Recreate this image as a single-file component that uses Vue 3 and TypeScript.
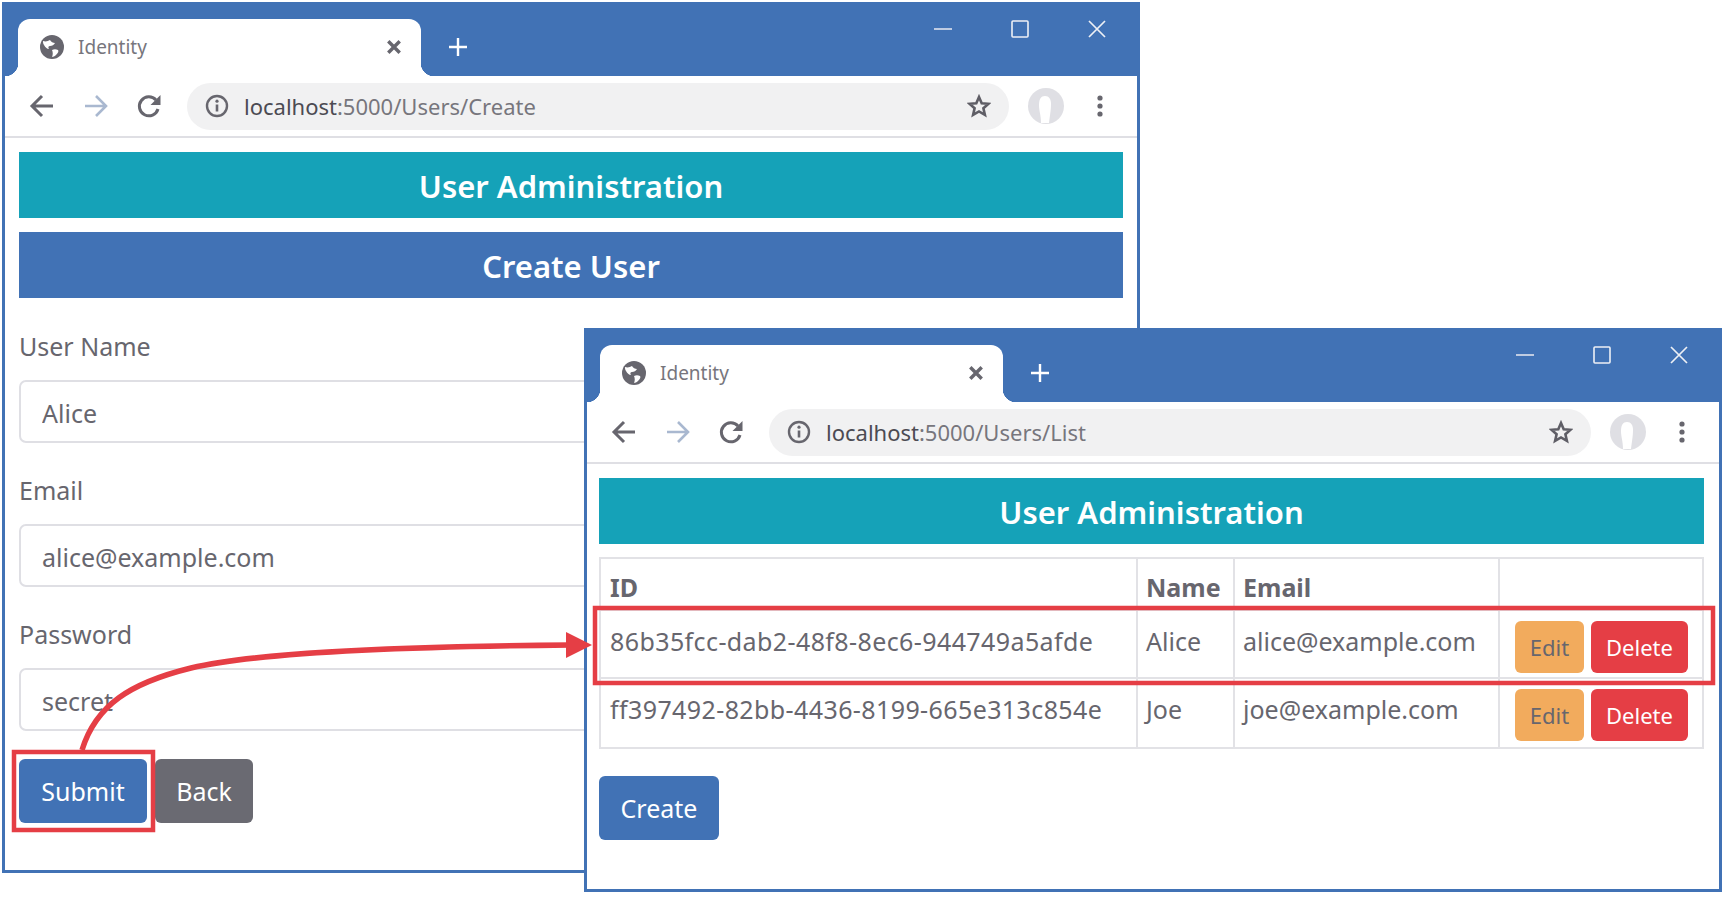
<script setup lang="ts">
interface BrowserWindow {
  id: string;
  host: string;
  path: string;
}

interface UserRow {
  id: string;
  name: string;
  email: string;
}

const windows: BrowserWindow[] = [
  { id: 'create', host: 'localhost', path: ':5000/Users/Create' },
  { id: 'list', host: 'localhost', path: ':5000/Users/List' },
];

const fields = [
  { label: 'User Name', value: 'Alice' },
  { label: 'Email', value: 'alice@example.com' },
  { label: 'Password', value: 'secret' },
];

const users: UserRow[] = [
  { id: '86b35fcc-dab2-48f8-8ec6-944749a5afde', name: 'Alice', email: 'alice@example.com' },
  { id: 'ff397492-82bb-4436-8199-665e313c854e', name: 'Joe', email: 'joe@example.com' },
];
</script>

<template>
  <div class="page">
    <section v-for="win in windows" :key="win.id" class="window" :class="`window--${win.id}`">
      <header class="titlebar">
        <div class="tab">
          <svg class="globe" viewBox="0 0 24 24">
            <circle cx="12" cy="12" r="12" fill="#67666e" />
            <path d="M3 6c3 1 5 0 7-1 1 2 3 3 5 3-1 2-3 3-5 3-2 0-2 2-1 3-2 0-4-2-5-4-1-1-1-3-1-4zM12 15c2-1 4-1 6 0 1 1 0 3-2 5-1 1-3 2-4 2 1-2 1-5 0-7z" fill="#fff" />
          </svg>
          <span class="tab__title">Identity</span>
          <svg class="tab__close" viewBox="0 0 14 14">
            <path d="M2 2l10 10M12 2L2 12" stroke="#67666e" stroke-width="3" fill="none" />
          </svg>
        </div>
        <svg class="newtab" viewBox="0 0 20 20">
          <path d="M10 1v18M1 10h18" stroke="#fff" stroke-width="2.4" fill="none" />
        </svg>
        <div class="controls">
          <svg viewBox="0 0 18 18"><path d="M0 9h18" stroke="#dfe3ee" stroke-width="1.6" /></svg>
          <svg viewBox="0 0 18 18"><rect x="1" y="1" width="16" height="16" rx="1" stroke="#eef0f5" stroke-width="1.6" fill="none" /></svg>
          <svg viewBox="0 0 18 18"><path d="M1 1l16 16M17 1L1 17" stroke="#eef0f5" stroke-width="1.7" fill="none" /></svg>
        </div>
      </header>

      <div class="toolbar">
        <svg class="navicon" viewBox="0 0 28 28">
          <path d="M25 14H5M14 4L4 14l10 10" stroke="#67666e" stroke-width="3" fill="none" />
        </svg>
        <svg class="navicon" viewBox="0 0 28 28">
          <path d="M3 14h20M14 4l10 10-10 10" stroke="#a9b8d0" stroke-width="2.6" fill="none" />
        </svg>
        <svg class="navicon" viewBox="0 0 28 28">
          <path d="M22 17a9.5 9.5 0 1 1-2-9" stroke="#67666e" stroke-width="3" fill="none" />
          <path d="M24.5 3v10h-10z" fill="#67666e" />
        </svg>
        <div class="omnibox">
          <svg class="info" viewBox="0 0 24 24">
            <circle cx="12" cy="12" r="10" stroke="#67666e" stroke-width="2.4" fill="none" />
            <path d="M12 10.5v7" stroke="#67666e" stroke-width="2.6" />
            <circle cx="12" cy="7.2" r="1.6" fill="#67666e" />
          </svg>
          <span class="url"><span class="url__host">{{ win.host }}</span>{{ win.path }}</span>
          <svg class="star" viewBox="0 0 24 24">
            <path d="M12 3l2.7 6.2 6.8.6-5.1 4.5 1.5 6.6L12 17.4l-5.9 3.5 1.5-6.6-5.1-4.5 6.8-.6z" stroke="#5f5e66" stroke-width="2.6" fill="none" />
          </svg>
        </div>
        <svg class="avatar" viewBox="0 0 36 36">
          <circle cx="18" cy="18" r="18" fill="#dfdfe4" />
          <path d="M13 35c0-8-2-12-2-18 0-6 2-9 6-9s6 3 6 8c0 6-1 11-2 19z" fill="#fff" />
        </svg>
        <svg class="kebab" viewBox="0 0 6 24">
          <circle cx="3" cy="4" r="2.6" fill="#67666e" />
          <circle cx="3" cy="12" r="2.6" fill="#67666e" />
          <circle cx="3" cy="20" r="2.6" fill="#67666e" />
        </svg>
      </div>

      <main class="content">
        <div class="banner banner--teal">User Administration</div>

        <template v-if="win.id === 'create'">
          <div class="banner banner--blue banner--second">Create User</div>
          <form class="form">
            <div v-for="field in fields" :key="field.label" class="field">
              <label class="field__label">{{ field.label }}</label>
              <input class="field__input" type="text" :value="field.value" readonly />
            </div>
            <div class="actions">
              <button type="button" class="btn btn--blue btn--submit">Submit</button>
              <button type="button" class="btn btn--grey btn--back">Back</button>
            </div>
          </form>
        </template>

        <template v-else>
          <table class="users">
            <colgroup>
              <col class="users__id" />
              <col class="users__name" />
              <col class="users__email" />
              <col />
            </colgroup>
            <thead>
              <tr>
                <th>ID</th>
                <th>Name</th>
                <th>Email</th>
                <th></th>
              </tr>
            </thead>
            <tbody>
              <tr v-for="user in users" :key="user.id">
                <td class="users__guid">{{ user.id }}</td>
                <td>{{ user.name }}</td>
                <td>{{ user.email }}</td>
                <td class="users__actions">
                  <button type="button" class="btn btn--small btn--orange">Edit</button>
                  <button type="button" class="btn btn--small btn--red">Delete</button>
                </td>
              </tr>
            </tbody>
          </table>
          <button type="button" class="btn btn--blue btn--create">Create</button>
        </template>
      </main>
    </section>

    <svg class="callouts" viewBox="0 0 1725 897">
      <rect x="14" y="752" width="139" height="78" fill="none" stroke="#e53e45" stroke-width="4.5" />
      <rect x="595" y="608" width="1118" height="75" fill="none" stroke="#e53e45" stroke-width="4.5" />
      <path d="M82 750C96 705 130 683 191 668C250 654 370 647 570 645" fill="none" stroke="#e53e45" stroke-width="5.5" />
      <path d="M566 632L592 645L566 658z" fill="#e53e45" />
    </svg>
  </div>
</template>

<style>
html,
body {
  margin: 0;
  background: #fff;
}
</style>

<style scoped>
.page {
  position: relative;
  width: 1725px;
  height: 897px;
  overflow: hidden;
  background: #fff;
  font-family: "Noto Sans", "Open Sans", sans-serif;
  color: #67666e;
}

.window {
  position: absolute;
  box-sizing: border-box;
  display: flex;
  flex-direction: column;
  border: 3px solid #4172b5;
  background: #fff;
}

.window--create {
  left: 2px;
  top: 2px;
  width: 1138px;
  height: 871px;
}

.window--list {
  left: 584px;
  top: 328px;
  width: 1138px;
  height: 564px;
}

.titlebar {
  display: flex;
  align-items: flex-start;
  height: 71px;
  flex: none;
  padding-left: 13px;
  background: #4172b5;
}

.tab {
  position: relative;
  display: flex;
  align-items: center;
  box-sizing: border-box;
  width: 403px;
  height: 57px;
  margin-top: 14px;
  padding: 0 19px 2px 22px;
  background: #fff;
  border-radius: 12px 12px 0 0;
}

.tab::before,
.tab::after {
  content: "";
  position: absolute;
  bottom: 0;
  width: 13px;
  height: 13px;
}

.tab::before {
  left: -13px;
  background: radial-gradient(circle at 0 0, #4172b5 13px, #fff 13.5px);
}

.tab::after {
  right: -13px;
  background: radial-gradient(circle at 100% 0, #4172b5 13px, #fff 13.5px);
}

.globe {
  width: 24px;
  height: 24px;
  flex: none;
}

.tab__title {
  margin-left: 14px;
  font-size: 19px;
  color: #77767d;
}

.tab__close {
  width: 16px;
  height: 16px;
  margin-left: auto;
}

.newtab {
  width: 20px;
  height: 20px;
  margin: 32px 0 0 27px;
}

.controls {
  display: flex;
  gap: 59px;
  margin: 15px 0 0 auto;
  padding-right: 31px;
}

.controls svg {
  width: 18px;
  height: 18px;
}

.toolbar {
  display: flex;
  align-items: center;
  box-sizing: border-box;
  height: 62px;
  flex: none;
  padding-left: 23px;
  border-bottom: 2px solid #dfdfe4;
}

.navicon {
  width: 28px;
  height: 28px;
  flex: none;
  margin-right: 26px;
}

.navicon:nth-child(3) {
  margin-right: 23px;
}

.omnibox {
  display: flex;
  align-items: center;
  box-sizing: border-box;
  width: 822px;
  height: 47px;
  padding: 0 18px;
  border-radius: 24px;
  background: #f1f1f2;
}

.info {
  width: 24px;
  height: 24px;
  flex: none;
}

.url {
  margin-left: 15px;
  font-size: 22px;
  color: #77767d;
}

.url__host {
  color: #4c4b53;
}

.star {
  width: 24px;
  height: 24px;
  margin-left: auto;
}

.avatar {
  width: 36px;
  height: 36px;
  flex: none;
  margin-left: 19px;
}

.kebab {
  width: 6px;
  height: 24px;
  flex: none;
  margin-left: 33px;
}

.content {
  display: flex;
  flex-direction: column;
  align-items: flex-start;
  padding: 14px 14px 0 14px;
}

.window--list .content {
  padding: 14px 15px 0 12px;
}

.banner {
  align-self: stretch;
  height: 66px;
  line-height: 68px;
  text-align: center;
  font-size: 31px;
  font-weight: 600;
  color: #fff;
}

.banner--teal {
  background: #15a2b8;
}

.banner--blue {
  background: #4172b5;
}

.banner--second {
  margin-top: 14px;
}

.form {
  align-self: stretch;
  margin-top: 31px;
}

.field + .field {
  margin-top: 30px;
}

.field__label {
  display: block;
  height: 34px;
  margin-bottom: 17px;
  font-size: 25px;
  line-height: 34px;
}

.field__input {
  display: block;
  box-sizing: border-box;
  width: 100%;
  height: 63px;
  padding: 2px 21px 0;
  border: 2px solid #dfdfe4;
  border-radius: 7px;
  background: #fff;
  color: #67666e;
  font: 25px "Noto Sans", "Open Sans", sans-serif;
  outline: none;
}

.actions {
  display: flex;
  margin-top: 28px;
}

.btn {
  box-sizing: border-box;
  border: none;
  border-radius: 6px;
  font-family: inherit;
  font-size: 25px;
  color: #fff;
}

.btn--blue {
  background: #4172b5;
}

.btn--grey {
  background: #6a6a72;
}

.btn--submit {
  width: 128px;
  height: 64px;
}

.btn--back {
  width: 98px;
  height: 64px;
  margin-left: 8px;
}

.btn--create {
  width: 120px;
  height: 64px;
  margin-top: 27px;
}

.users {
  align-self: stretch;
  margin-top: 13px;
  border-collapse: collapse;
  table-layout: fixed;
}

.users th,
.users td {
  box-sizing: border-box;
  padding: 11px 8px 0;
  border: 2px solid #e2e2e6;
  font-size: 25px;
  text-align: left;
  vertical-align: top;
}

.users td {
  padding-top: 13px;
}

.users th {
  height: 52px;
  font-weight: 700;
}

.users tbody tr:first-child td {
  height: 68px;
}

.users tbody tr:last-child td {
  height: 70px;
}

.users th:first-child,
.users .users__guid {
  padding-left: 9px;
}

.users .users__guid {
  letter-spacing: 0.4px;
}

.users__id {
  width: 537px;
}

.users__name {
  width: 97px;
}

.users__email {
  width: 265px;
}

.users .users__actions {
  padding: 10px 0 0 15px;
  white-space: nowrap;
}

.btn--small {
  height: 52px;
  font-size: 22px;
  vertical-align: top;
}

.btn--orange {
  width: 69px;
  background: #f2ab5d;
  color: #67666e;
}

.btn--red {
  width: 97px;
  margin-left: 7px;
  background: #e53e45;
}

.callouts {
  position: absolute;
  inset: 0;
  width: 1725px;
  height: 897px;
  pointer-events: none;
}
</style>
